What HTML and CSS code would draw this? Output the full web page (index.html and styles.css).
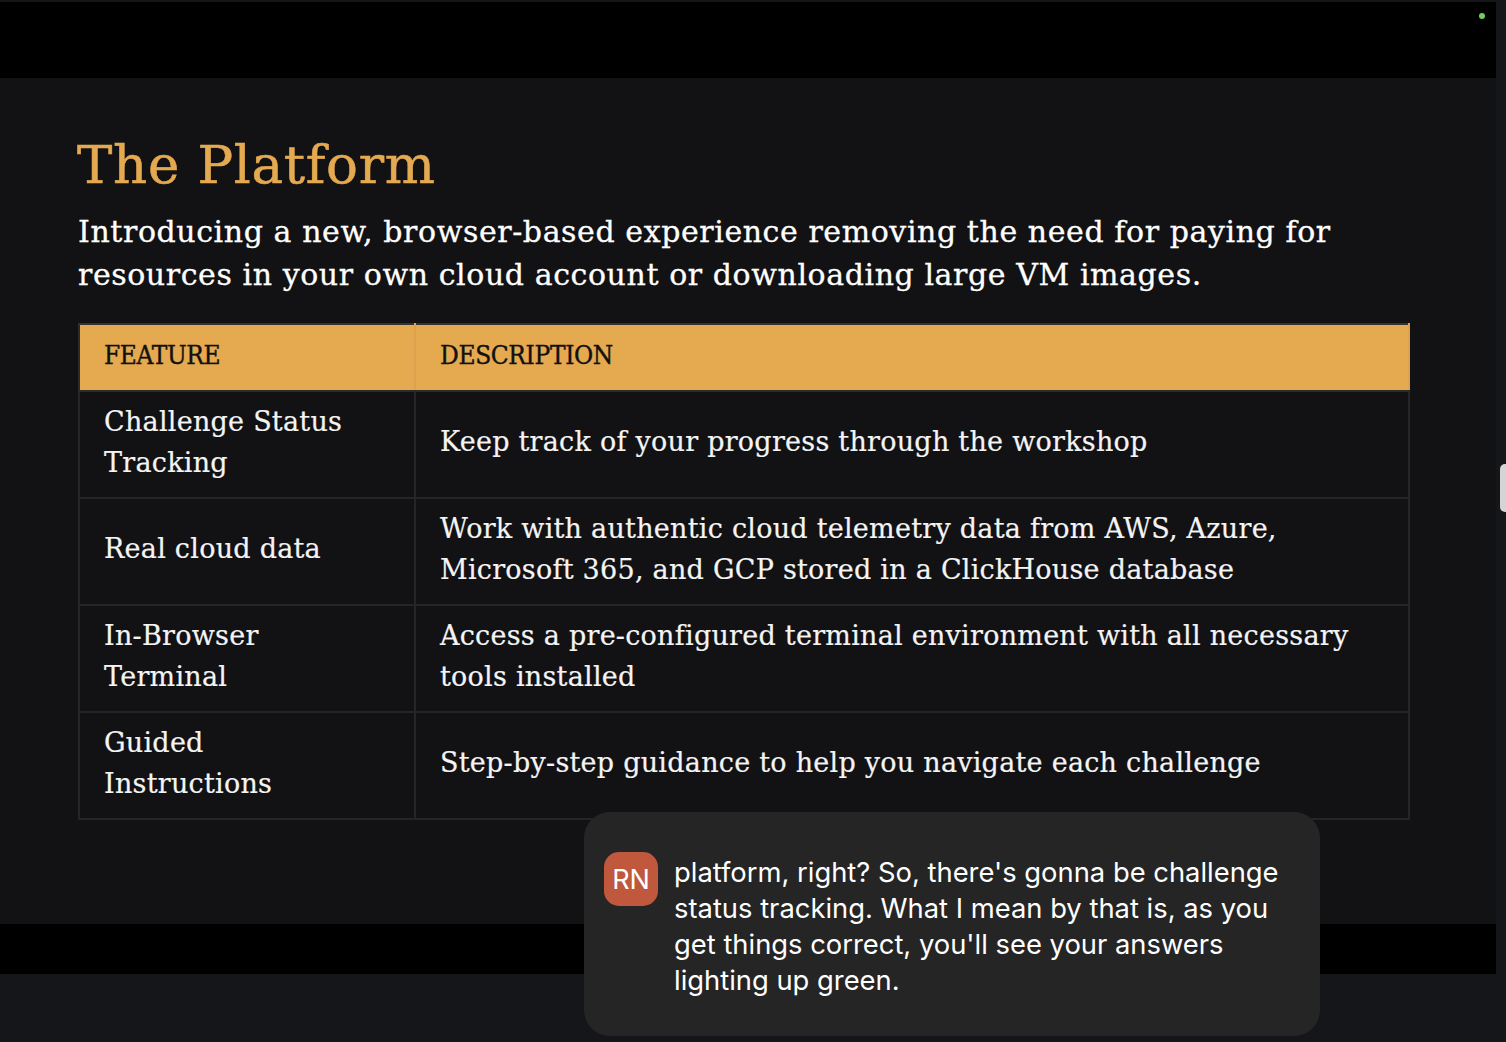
FILE: index.html
```html
<!DOCTYPE html>
<html lang="en">
<head>
<meta charset="utf-8">
<title>The Platform</title>
<link rel="stylesheet" href="styles.css">
</head>
<body>
<main class="stage">
  <div class="band band-top"><span class="status-dot"></span></div>
  <section class="slide">
    <h1 class="title">The Platform</h1>
    <p class="lead">Introducing a new, browser-based experience removing the need for paying for resources in your own cloud account or downloading large VM images.</p>
    <table class="features">
      <thead>
        <tr><th class="col-a">FEATURE</th><th>DESCRIPTION</th></tr>
      </thead>
      <tbody>
        <tr><td class="name">Challenge Status Tracking</td><td>Keep track of your progress through the workshop</td></tr>
        <tr><td class="name">Real cloud data</td><td>Work with authentic cloud telemetry data from AWS, Azure, Microsoft 365, and GCP stored in a ClickHouse database</td></tr>
        <tr><td class="name">In-Browser Terminal</td><td>Access a pre-configured terminal environment with all necessary tools installed</td></tr>
        <tr><td class="name">Guided Instructions</td><td>Step-by-step guidance to help you navigate each challenge</td></tr>
      </tbody>
    </table>
  </section>
  <div class="band band-bottom"></div>
</main>
<div class="scroll-handle"></div>
<aside class="caption">
  <div class="avatar">RN</div>
  <p class="caption-text">platform, right? So, there's gonna be challenge status tracking. What I mean by that is, as you get things correct, you'll see your answers lighting up green.</p>
</aside>
</body>
</html>
```
FILE: styles.css
```css
* { box-sizing: border-box; }
html, body { margin: 0; height: 1042px; overflow: hidden; }
body { background: #14161a; padding-top: 2px; font-family: "DejaVu Serif", serif; }
.stage { width: 1496px; display: flex; flex-direction: column; background: #000; }
.band { background: #000; }
.band-top { height: 76px; display: flex; justify-content: flex-end; padding: 11px 11px 0 0; }
.band-bottom { height: 50px; }
.status-dot { width: 6px; height: 6px; border-radius: 50%; background: #6fcf5f; }
.slide { height: 846px; background: #121214; padding: 53px 86px 0 78px; }
.title { margin: 0 0 0 -1px; font-size: 53px; line-height: 68px; font-weight: 400; color: #e5a950; letter-spacing: 0.7px; -webkit-text-stroke: 0.6px #e5a950; }
.lead { margin: 0; font-size: 30px; line-height: 43px; color: #fff; padding-top: 11px; letter-spacing: 0.58px; -webkit-text-stroke: 0.3px #fff; }
.features { margin-top: 27px; width: 1332px; border-collapse: collapse; table-layout: fixed; }
.features th, .features td { border: 2px solid #242528; padding: 0 24px 6px; text-align: left; }
.features th { height: 67px; background: #e5a950; color: #111; font-family: "DejaVu Serif Condensed", "DejaVu Serif", serif; font-size: 26px; font-weight: 400; letter-spacing: -0.35px; -webkit-text-stroke: 0.4px #111; border-color: #333335 #dca24d #2a2b2e #2a2b2e; }
.features td { height: 107px; color: #f4f4f4; font-size: 27px; line-height: 41px; letter-spacing: 0.25px; -webkit-text-stroke: 0.2px #f4f4f4; }
.features td.name { padding-right: 40px; }
.col-a { width: 336px; }
.scroll-handle { position: absolute; left: 1500px; top: 464px; width: 6px; height: 48px; background: #d4d4d4; border-radius: 5px 0 0 5px; }
.caption { position: absolute; left: 584px; top: 812px; width: 736px; height: 224px; background: #252525; border-radius: 26px; padding: 40px 20px 0; display: flex; gap: 16px; align-items: flex-start; }
.avatar { flex: none; width: 54px; height: 54px; border-radius: 15px; background: #c0583e; color: #fff; font: 400 27px/56px "Inter", sans-serif; text-align: center; }
.caption-text { margin: 2px 0 0; color: #fff; font: 400 27.36px/36px "Inter", sans-serif; }
```
